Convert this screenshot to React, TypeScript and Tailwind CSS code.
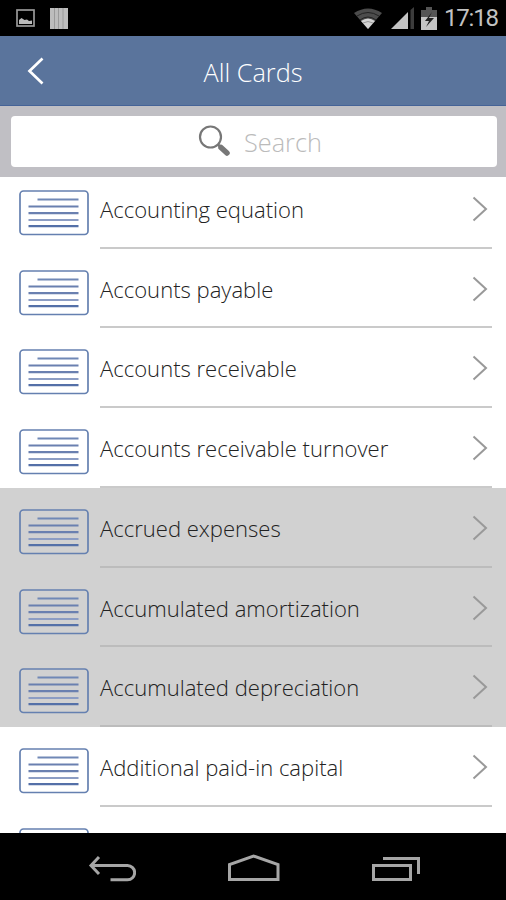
import React, { FC } from 'react';

interface Card {
  title: string;
  pressed?: boolean;
}

const cards: Card[] = [
  { title: 'Accounting equation' },
  { title: 'Accounts payable' },
  { title: 'Accounts receivable' },
  { title: 'Accounts receivable turnover' },
  { title: 'Accrued expenses', pressed: true },
  { title: 'Accumulated amortization', pressed: true },
  { title: 'Accumulated depreciation', pressed: true },
  { title: 'Additional paid-in capital' },
  { title: '' },
];

const CardIcon: FC = () => (
  <svg className="mt-[21px] h-[46px] w-[70px] shrink-0" viewBox="0 0 70 46" fill="none">
    <rect x="1" y="1" width="68" height="43.5" rx="3.5" stroke="#6580b0" strokeWidth="1.7" />
    <path d="M18.5 9.5H59.5" stroke="#7088b6" strokeWidth="2" />
    <path d="M9.5 16.5H59.5M9.5 23.2H59.5" stroke="#6a80b0" strokeWidth="2.2" />
    <path d="M9.5 30H59.5" stroke="#8c9dc4" strokeWidth="2.2" />
    <path d="M9.5 36.2H59.5" stroke="#5470a8" strokeWidth="2.2" />
  </svg>
);

const Row: FC<{ card: Card }> = ({ card }) => (
  <li className={`flex h-[79.75px] shrink-0 pr-[14px] pl-[19px] ${card.pressed ? 'bg-[#d1d1d1]' : 'bg-white'}`}>
    <CardIcon />
    <div
      className={`ml-[11px] flex flex-1 justify-between border-b-2 ${
        card.pressed ? 'border-[#bcbcbc]' : 'border-[#cacaca]'
      }`}
    >
      <span className="mt-[25px] text-[22.05px] leading-[30px] font-light whitespace-nowrap text-[#222]">
        {card.title}
      </span>
      <svg className="mt-[27px] mr-1 h-[27px] w-4" viewBox="0 0 16 27" fill="none">
        <path d="M1.5 1.5L14 13L1.5 24.5" stroke="#999" strokeWidth="2" />
      </svg>
    </div>
  </li>
);

const StatusBar: FC = () => (
  <div className="flex h-9 shrink-0 items-center justify-between bg-black pr-[7px] pl-4">
    <div className="flex items-center gap-[15px]">
      <svg className="h-[18px] w-[19px]" viewBox="0 0 19 18">
        <rect x="1" y="1" width="17" height="16" fill="none" stroke="#999" strokeWidth="1.7" />
        <path d="M3 15V11L5.5 9L8.5 11L11 10.5L13 12L16 11.5V15Z" fill="#bbb" />
      </svg>
      <svg className="h-[21px] w-[18px]" viewBox="0 0 18 21">
        <path d="M0 0H18V21H0Z" fill="#bdbdbd" />
        <path d="M4.5 0V21M8.5 0V21M13 0V21" stroke="#9a9a9a" />
      </svg>
    </div>
    <div className="flex items-center">
      <svg className="h-[21px] w-[28px]" viewBox="0 0 28 21">
        <path d="M0 5Q14 -4 28 5L14 21Z" fill="#4c4c4c" />
        <path d="M3 8Q14 1 25 8M6 12Q14 6 22 12" fill="none" stroke="#222" strokeWidth="1" />
        <path d="M7 13Q14 8 21 13L14 21Z" fill="#d4d4d4" />
        <path d="M9 15Q14 12 19 15" fill="none" stroke="#888" strokeWidth="0.8" />
      </svg>
      <svg className="ml-[9px] h-[22px] w-[24px]" viewBox="0 0 24 22">
        <path d="M0 22L17 5V22Z" fill="#c4c4c4" />
        <path d="M19.5 3L23 0V22H19.5Z" fill="#3c3c3c" />
      </svg>
      <svg className="ml-[6px] h-[23px] w-[16px]" viewBox="0 0 16 23">
        <path d="M0 3H5V0H11V3H16V11H0Z" fill="#555" />
        <path d="M0 10H16V23H0Z" fill="#c4c4c4" />
        <path d="M11 5L4 14H8L5 20L13 11H8Z" fill="#222" />
      </svg>
      <span className="ml-[7px] w-[55px] font-['Roboto',sans-serif] text-[24px] leading-9 tracking-[-1.2px] text-[#c2c2c2]">
        17:18
      </span>
    </div>
  </div>
);

const NavBar: FC = () => (
  <div className="flex h-[67px] shrink-0 bg-black pt-[20px] pl-[88px]">
    <svg className="h-[30px] w-[48px]" viewBox="0 0 48 30" fill="none" stroke="#a6a6a6" strokeWidth="3">
      <path d="M11 4L3 12.5L11 21M3 12.5H39.5A7 7 0 0 1 39.5 26.8H22.5" />
    </svg>
    <svg className="ml-[91px] h-[30px] w-[54px]" viewBox="0 0 54 30" fill="none" stroke="#a6a6a6" strokeWidth="3">
      <path d="M2.5 26.5V11.5L26.5 3L51 11.5V26.5Z" />
    </svg>
    <svg className="ml-[90px] h-[30px] w-[50px]" viewBox="0 0 50 30" fill="none" stroke="#a6a6a6" strokeWidth="3">
      <path d="M2.5 12.5H39.5V26.5H2.5ZM12 5.5H47.5V21" />
    </svg>
  </div>
);

const App: FC = () => {
  return (
    <div className="flex h-[900px] w-[506px] flex-col overflow-hidden bg-white font-['Open_Sans',sans-serif]">
      <StatusBar />

      <header className="grid h-[70px] shrink-0 grid-cols-[60px_1fr_60px] items-center border-b border-[#456397] bg-[#5a749c]">
        <svg className="ml-[27px] h-[28px] w-[17px]" viewBox="0 0 17 28" fill="none">
          <path d="M15.5 1.5L2.5 14L15.5 26.5" stroke="#fff" strokeWidth="2.7" />
        </svg>
        <h1 className="mt-[2px] text-center text-[25.3px] leading-[34px] font-light text-white">All Cards</h1>
      </header>

      <div className="h-[71px] shrink-0 bg-[#c0bfc4] pt-[10px] pr-[9px] pl-[11px]">
        <div className="flex h-[51px] rounded bg-white pl-[187px]">
          <svg className="mt-[8px] h-[34px] w-[34px]" viewBox="0 0 34 34" fill="none">
            <circle cx="12.5" cy="13" r="10.5" stroke="#777" strokeWidth="2.2" />
            <path d="M20 20.5L24 24.5" stroke="#777" strokeWidth="2.5" />
            <path d="M23 23.5L29 29" stroke="#777" strokeWidth="5.5" strokeLinecap="round" />
          </svg>
          <span className="mt-[9px] ml-[12px] text-[25.3px] leading-[34px] font-light text-[#bbb]">Search</span>
        </div>
      </div>

      <div className="min-h-0 flex-1 overflow-hidden">
        <ul className="-mt-[8.25px] flex flex-col">
          {cards.map((card) => (
            <Row key={card.title} card={card} />
          ))}
        </ul>
      </div>

      <NavBar />
    </div>
  );
};

export default App;
